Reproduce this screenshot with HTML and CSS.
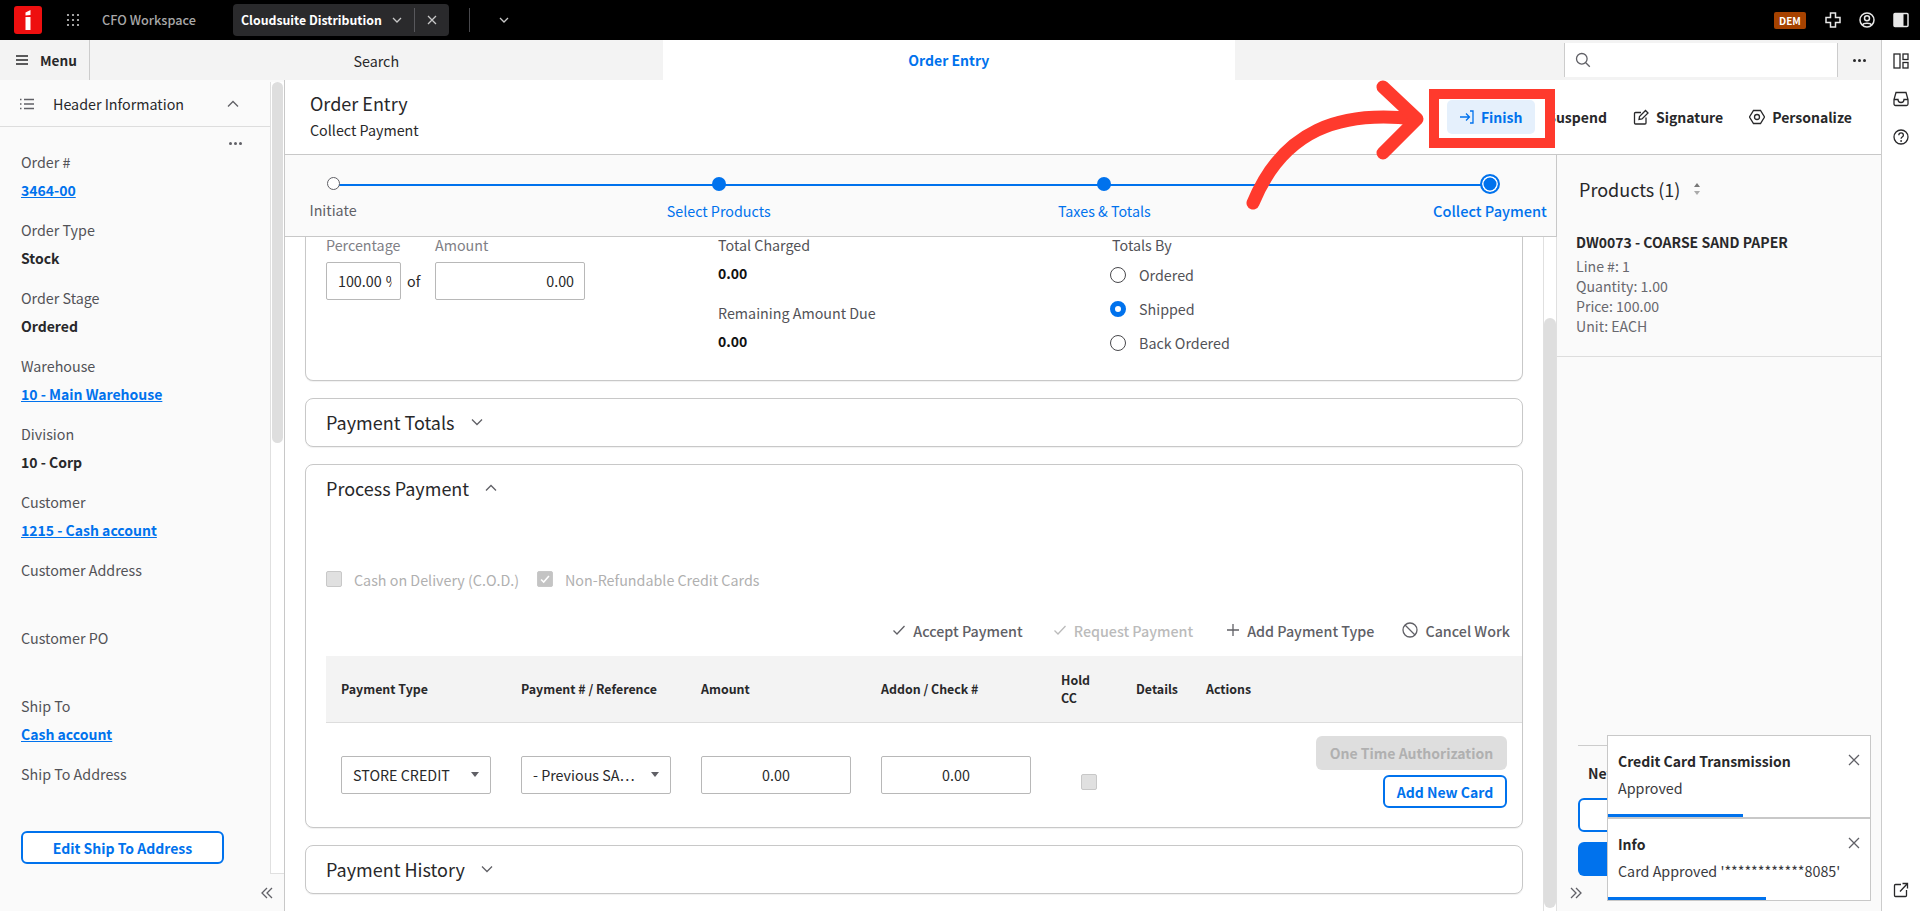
FILE: index.html
```html
<!DOCTYPE html>
<html lang="en">
<head>
<meta charset="utf-8">
<title>Order Entry</title>
<link rel="stylesheet" href="styles.css">
</head>
<body>
<header class="topbar">
  <svg class="logo" viewBox="0 0 28 28"><rect width="28" height="28" rx="3" fill="#ee0f0f"/><path d="M11.5 11h5v13h-5zM11.5 6.500l5-2.500v5l-5 .5z" fill="#fff"/></svg>
  <svg class="grid-ic" viewBox="0 0 14 14" fill="#c8c8c8"><circle cx="2" cy="2" r="1.100"/><circle cx="7" cy="2" r="1.100"/><circle cx="12" cy="2" r="1.100"/><circle cx="2" cy="7" r="1.100"/><circle cx="7" cy="7" r="1.100"/><circle cx="12" cy="7" r="1.100"/><circle cx="2" cy="12" r="1.100"/><circle cx="7" cy="12" r="1.100"/><circle cx="12" cy="12" r="1.100"/></svg>
  <span class="workspace-name">CFO Workspace</span>
  <div class="app-tab">
    <span class="app-tab-name">Cloudsuite Distribution</span>
    <svg class="ic-10 tab-chev" viewBox="0 0 10 10"><path d="M1 3l4 4 4-4" class="st-light"/></svg>
    <span class="tab-sep"></span>
    <svg class="ic-10 tab-x" viewBox="0 0 10 10"><path d="M1 1l8 8M9 1l-8 8" class="st-light"/></svg>
  </div>
  <span class="top-sep"></span>
  <svg class="ic-10 top-chev" viewBox="0 0 10 10"><path d="M1 3l4 4 4-4" class="st-light"/></svg>
  <span class="badge">DEM</span>
  <svg class="ic-16 top-plus" viewBox="0 0 16 16"><path d="M5.500 1h5v4.500H15v5h-4.500V15h-5v-4.500H1v-5h4.500z" class="st-white"/></svg>
  <svg class="ic-16 top-user" viewBox="0 0 16 16"><circle cx="8" cy="8" r="7" class="st-white"/><circle cx="8" cy="6.300" r="2.500" class="st-white"/><path d="M3.500 13c1-2.500 8-2.500 9 0" class="st-white"/></svg>
  <svg class="ic-16 top-panel" viewBox="0 0 16 16"><rect x="1" y="1.500" width="14" height="13" rx="1" class="st-white"/><rect x="1" y="1.500" width="9.500" height="13" fill="#e8e8e8"/></svg>
</header>

<div class="shell">
  <div class="app">
    <nav class="navbar">
      <div class="menu-btn">
        <svg class="ic-12" viewBox="0 0 12 12"><path d="M0 2h12M0 6h12M0 10h12" class="st-dark"/></svg>
        <span>Menu</span>
      </div>
      <div class="nav-tab">Search</div>
      <div class="nav-tab nav-tab-active">Order Entry</div>
      <div class="nav-search">
        <svg class="ic-16" viewBox="0 0 16 16"><circle cx="6.800" cy="6.800" r="5.300" class="st-gray"/><path d="M10.800 10.800l4 4" class="st-gray"/></svg>
      </div>
      <div class="nav-more"><span class="dots dots-dark"><i></i><i></i><i></i></span></div>
    </nav>

    <div class="workspace">
      <aside class="leftpanel">
        <div class="left-top">
          <div class="left-content">
            <div class="left-head">
              <svg class="ic-14" viewBox="0 0 14 14"><path d="M4 2.500h10M4 7h10M4 11.500h10" class="st-gray"/><path d="M0 2.500h1.500M0 7h1.500M0 11.500h1.500" class="st-gray"/></svg>
              <span class="left-title">Header Information</span>
              <svg class="ic-12 left-chev" viewBox="0 0 12 12"><path d="M1 8.500l5-5 5 5" class="st-gray"/></svg>
            </div>
            <div class="left-dots"><span class="dots"><i></i><i></i><i></i></span></div>
            <div class="field"><div class="field-label">Order #</div><a class="field-link">3464-00</a></div>
            <div class="field"><div class="field-label">Order Type</div><div class="field-value">Stock</div></div>
            <div class="field"><div class="field-label">Order Stage</div><div class="field-value">Ordered</div></div>
            <div class="field"><div class="field-label">Warehouse</div><a class="field-link">10 - Main Warehouse</a></div>
            <div class="field"><div class="field-label">Division</div><div class="field-value">10 - Corp</div></div>
            <div class="field"><div class="field-label">Customer</div><a class="field-link">1215 - Cash account</a></div>
            <div class="field"><div class="field-label">Customer Address</div></div>
            <div class="field"><div class="field-label">Customer PO</div></div>
            <div class="field"><div class="field-label">Ship To</div><a class="field-link">Cash account</a></div>
            <div class="field"><div class="field-label">Ship To Address</div></div>
            <button class="btn-outline btn-edit">Edit Ship To Address</button>
          </div>
          <div class="left-track"><div class="left-thumb"></div></div>
        </div>
        <div class="left-foot">
          <svg class="ic-12" viewBox="0 0 12 12"><path d="M6 1L1 6l5 5M11 1L6 6l5 5" class="st-gray"/></svg>
        </div>
      </aside>

      <main class="main">
        <div class="page-head">
          <div class="page-titles">
            <div class="page-title">Order Entry</div>
            <div class="page-sub">Collect Payment</div>
          </div>
          <div class="page-actions">
            <button class="act act-finish">
              <svg class="ic-14" viewBox="0 0 14 14"><path d="M0 7h9M6 3.500L9.500 7 6 10.500M10 1h3v12h-3" class="st-blue"/></svg>
              <span>Finish</span>
            </button>
            <button class="act act-suspend"><span>Suspend</span></button>
            <button class="act">
              <svg class="ic-16" viewBox="0 0 16 16"><path d="M13 8.500V14a1 1 0 0 1-1 1H2.500a1 1 0 0 1-1-1V4.500a1 1 0 0 1 1-1H8M6 10.500l.5-3L12.500 1.500l2.500 2.500-6 6z" class="st-dark"/></svg>
              <span>Signature</span>
            </button>
            <button class="act">
              <svg class="ic-16" viewBox="0 0 16 16"><path d="M4.500 1.500h7L15.500 8l-4 6.500h-7L.5 8z" class="st-dark"/><circle cx="8" cy="8" r="2.500" class="st-dark"/></svg>
              <span>Personalize</span>
            </button>
          </div>
        </div>

        <div class="page-body">
          <section class="center">
            <div class="stepper">
              <div class="step"><span class="step-dot step-dot-open"></span><span class="step-label step-label-muted">Initiate</span></div>
              <div class="step"><span class="step-dot"></span><span class="step-label">Select Products</span></div>
              <div class="step"><span class="step-dot"></span><span class="step-label">Taxes &amp; Totals</span></div>
              <div class="step"><span class="step-dot step-dot-current"></span><span class="step-label step-label-current">Collect Payment</span></div>
            </div>

            <div class="center-scroll">
              <div class="cards">
                <div class="card card-summary">
                  <div class="summary-col">
                    <div class="amount-row">
                      <div class="amount-group amount-group-pct">
                        <label class="muted-label">Percentage</label>
                        <div class="input input-pct"><span>100.00</span><span class="pct-sign">%</span></div>
                      </div>
                      <span class="of">of</span>
                      <div class="amount-group">
                        <label class="muted-label">Amount</label>
                        <div class="input input-amt">0.00</div>
                      </div>
                    </div>
                  </div>
                  <div class="summary-col">
                    <div class="stat"><div class="stat-label">Total Charged</div><div class="stat-value">0.00</div></div>
                    <div class="stat"><div class="stat-label">Remaining Amount Due</div><div class="stat-value">0.00</div></div>
                  </div>
                  <div class="summary-col">
                    <div class="stat-label radio-head">Totals By</div>
                    <div class="radio-row"><span class="radio"></span>Ordered</div>
                    <div class="radio-row"><span class="radio radio-on"></span>Shipped</div>
                    <div class="radio-row"><span class="radio"></span>Back Ordered</div>
                  </div>
                </div>

                <div class="card card-collapsed">
                  <span class="card-title">Payment Totals</span>
                  <svg class="ic-12" viewBox="0 0 12 12"><path d="M1 3.500l5 5 5-5" class="st-gray"/></svg>
                </div>

                <div class="card card-process">
                  <div class="process-head">
                    <span class="card-title">Process Payment</span>
                    <svg class="ic-12" viewBox="0 0 12 12"><path d="M1 8.500l5-5 5 5" class="st-gray"/></svg>
                  </div>
                  <div class="check-row">
                    <span class="check"></span><span class="check-label">Cash on Delivery (C.O.D.)</span>
                    <span class="check check-on"><svg viewBox="0 0 16 16"><path d="M3.500 8.500l3 3 6-7" fill="none" stroke="#fff" stroke-width="1.800"/></svg></span><span class="check-label">Non-Refundable Credit Cards</span>
                  </div>
                  <div class="tools">
                    <span class="tool"><svg class="ic-14" viewBox="0 0 14 14"><path d="M1.500 7.500l3.500 3.500 7.500-8" class="st-gray"/></svg>Accept Payment</span>
                    <span class="tool tool-off"><svg class="ic-14" viewBox="0 0 14 14"><path d="M1.500 7.500l3.500 3.500 7.500-8" class="st-faint"/></svg>Request Payment</span>
                    <span class="tool tool-add"><svg class="ic-14" viewBox="0 0 14 14"><path d="M7 1v12M1 7h12" class="st-gray"/></svg>Add Payment Type</span>
                    <span class="tool"><svg class="ic-16" viewBox="0 0 16 16"><circle cx="8" cy="8" r="7" class="st-gray"/><path d="M3 3l10 10" class="st-gray"/></svg>Cancel Work</span>
                  </div>
                  <div class="tbl-head">
                    <span>Payment Type</span>
                    <span>Payment # / Reference</span>
                    <span>Amount</span>
                    <span>Addon / Check #</span>
                    <span class="tbl-hold">Hold<br>CC</span>
                    <span>Details</span>
                    <span>Actions</span>
                  </div>
                  <div class="tbl-row">
                    <div class="select"><span class="select-text">STORE CREDIT</span><i class="caret"></i></div>
                    <div class="select"><span class="select-text">- Previous SA…</span><i class="caret"></i></div>
                    <div class="input input-cell">0.00</div>
                    <div class="input input-cell">0.00</div>
                    <span class="check check-cell"></span>
                    <span></span>
                    <div class="row-actions">
                      <button class="btn-disabled">One Time Authorization</button>
                      <button class="btn-outline btn-card">Add New Card</button>
                    </div>
                  </div>
                </div>

                <div class="card card-collapsed">
                  <span class="card-title">Payment History</span>
                  <svg class="ic-12" viewBox="0 0 12 12"><path d="M1 3.500l5 5 5-5" class="st-gray"/></svg>
                </div>
              </div>
              <div class="main-track"><div class="main-thumb"></div></div>
            </div>
          </section>

          <aside class="products">
            <div class="products-head">
              <span class="products-title">Products (1)</span>
              <svg class="sort-ic" viewBox="0 0 8 14"><path d="M4 1l3 4H1z" fill="#777"/><path d="M4 13l3-4H1z" fill="#aaa"/></svg>
            </div>
            <div class="product">
              <div class="product-name">DW0073 - COARSE SAND PAPER</div>
              <div class="product-line">Line #: 1</div>
              <div class="product-line">Quantity: 1.00</div>
              <div class="product-line">Price: 100.00</div>
              <div class="product-line">Unit: EACH</div>
            </div>
            <div class="products-foot">
              <div class="foot-title">New</div>
              <div class="foot-btn-outline"></div>
              <div class="foot-btn-solid"></div>
              <svg class="ic-12 foot-chev" viewBox="0 0 12 12"><path d="M1 1l5 5-5 5M6 1l5 5-5 5" class="st-gray"/></svg>
            </div>
          </aside>
        </div>
      </main>
    </div>
  </div>

  <aside class="rail">
    <svg class="ic-16 rail-a" viewBox="0 0 16 16"><rect x="1" y="1" width="6" height="14" class="st-dark"/><rect x="10" y="1" width="5" height="5.500" class="st-dark"/><rect x="10" y="9.500" width="5" height="5.500" class="st-dark"/></svg>
    <svg class="ic-16 rail-b" viewBox="0 0 16 16"><path d="M3 1.500h10l2 7V13a1.500 1.500 0 0 1-1.500 1.500h-11A1.500 1.500 0 0 1 1 13V8.500zM1 8.500h4c0 4 6 4 6 0h4" class="st-dark"/></svg>
    <svg class="ic-16 rail-c" viewBox="0 0 16 16"><circle cx="8" cy="8" r="7" class="st-dark"/><path d="M5.800 6.200c0-3 4.600-3 4.600 0 0 1.800-2.300 1.800-2.300 3.500" class="st-dark"/><circle cx="8.100" cy="12" r=".9" fill="#28282a"/></svg>
    <svg class="ic-16 rail-d" viewBox="0 0 16 16"><path d="M8 2.500H2.500a1 1 0 0 0-1 1V13.500a1 1 0 0 0 1 1H12.500a1 1 0 0 0 1-1V8M7 9.500L14.500 1.500M9.500 1.500h5V6.500" class="st-dark"/></svg>
  </aside>
</div>

<div class="toasts">
  <div class="toast">
    <div class="toast-head"><span class="toast-title">Credit Card Transmission</span><svg class="ic-12" viewBox="0 0 12 12"><path d="M1 1l10 10M11 1L1 11" class="st-gray"/></svg></div>
    <div class="toast-text">Approved</div>
    <div class="toast-bar" style="width:135px"></div>
  </div>
  <div class="toast">
    <div class="toast-head"><span class="toast-title">Info</span><svg class="ic-12" viewBox="0 0 12 12"><path d="M1 1l10 10M11 1L1 11" class="st-gray"/></svg></div>
    <div class="toast-text">Card Approved '************8085'</div>
    <div class="toast-bar" style="width:158px"></div>
  </div>
</div>

<svg class="annotation" viewBox="0 0 1920 911">
  <rect x="1434" y="94" width="116" height="49" fill="none" stroke="#ff3a2d" stroke-width="10"/>
  <path d="M1253 203C1283 130 1340 110 1415 119" fill="none" stroke="#ff3a2d" stroke-width="13" stroke-linecap="round"/>
  <path d="M1383 87L1417 119L1383 153" fill="none" stroke="#ff3a2d" stroke-width="13" stroke-linecap="round" stroke-linejoin="round"/>
</svg>
</body>
</html>
```

FILE: styles.css
```css
* { box-sizing: border-box; }
html, body { margin: 0; padding: 0; height: 911px; overflow: hidden; }
body {
  font-family: "Noto Sans CJK SC", "Noto Sans", sans-serif;
  font-size: 14.300px;
  color: #28282a;
  background: #fff;
  display: flex;
  flex-direction: column;
  position: relative;
}
button { font-family: inherit; cursor: default; }

.st-light, .st-white, .st-dark, .st-gray, .st-faint, .st-blue { fill: none; stroke-width: 1.3; }
.st-light { stroke: #c8c8c8; }
.st-white { stroke: #e8e8e8; stroke-width: 1.5; }
.st-dark { stroke: #28282a; }
.st-gray { stroke: #606066; }
.st-faint { stroke: #bbb; }
.st-blue { stroke: #0072ed; }
.ic-10 { width: 10px; height: 10px; flex: none; }
.ic-12 { width: 12px; height: 12px; flex: none; }
.ic-14 { width: 14px; height: 14px; flex: none; }
.ic-16 { width: 16px; height: 16px; flex: none; }

.dots { display: inline-flex; gap: 2px; }
.dots i { width: 3px; height: 3px; border-radius: 50%; background: #606066; }
.dots-dark i { background: #28282a; }

/* top bar */
.topbar { height: 40px; flex: none; background: #000; display: flex; align-items: center; padding-left: 14px; }
.logo { width: 28px; height: 28px; flex: none; }
.grid-ic { width: 14px; height: 14px; margin-left: 24px; flex: none; }
.workspace-name { margin-left: 22px; width: 131px; font-size: 12.700px; font-weight: 500; color: #a8a8a8; line-height: 20px; white-space: nowrap; }
.app-tab { width: 216px; height: 32px; background: #2a2a2c; border-radius: 4px; display: flex; align-items: center; padding-left: 8px; }
.app-tab-name { width: 151px; font-size: 12.300px; font-weight: 600; color: #fff; line-height: 20px; white-space: nowrap; }
.tab-chev { margin-left: 0; }
.tab-sep { width: 1px; height: 24px; background: #58585c; margin-left: 12px; }
.tab-x { margin-left: 12px; }
.top-sep { width: 1px; height: 24px; background: #48484c; margin-left: 20px; }
.top-chev { margin-left: 29px; }
.badge { margin-left: auto; width: 32px; height: 17px; background: #a64200; border-radius: 2px; color: #fff; font-size: 10px; font-weight: 700; line-height: 17px; text-align: center; }
.top-plus { margin-left: 19px; }
.top-user { margin-left: 18px; }
.top-panel { margin-left: 18px; margin-right: 11px; }

/* shell */
.shell { flex: 1; display: flex; min-height: 0; }
.app { flex: 1; display: flex; flex-direction: column; min-width: 0; }
.rail { width: 39px; flex: none; border-left: 1px solid #ccc; background: #fff; display: flex; flex-direction: column; align-items: center; padding-top: 13px; }
.rail-b { margin-top: 22px; }
.rail-c { margin-top: 22px; }
.rail-d { margin-top: auto; margin-bottom: 13px; }

/* nav */
.navbar { height: 40px; flex: none; background: #f3f3f3; display: flex; align-items: stretch; }
.menu-btn { width: 90px; flex: none; border-right: 1px solid #ccc; display: flex; align-items: center; gap: 12px; padding-left: 16px; font-size: 13.600px; font-weight: 600; }
.nav-tab { width: 572.500px; flex: none; display: flex; align-items: center; justify-content: center; font-size: 14.300px; }
.nav-tab-active { background: #fff; color: #0072ed; font-weight: 600; font-size: 14px; }
.nav-search { margin: 3px 0 3px 329px; width: 274px; background: #fff; border-left: 1px solid #ccc; border-right: 1px solid #ccc; display: flex; align-items: center; padding-left: 10px; }
.nav-more { flex: 1; display: flex; align-items: center; justify-content: center; }

/* workspace */
.workspace { flex: 1; display: flex; min-height: 0; }

/* left panel */
.leftpanel { width: 285px; flex: none; background: #fafafa; border-right: 1px solid #c8c8c8; display: flex; flex-direction: column; padding-top: 2px; }
.left-top { display: flex; height: 792px; }
.left-content { width: 270px; flex: none; overflow: hidden; }
.left-track { width: 14px; flex: none; background: #fff; border-left: 1px solid #e0e0e0; border-bottom: 1px solid #e0e0e0; padding: 0 1px; }
.left-thumb { height: 361px; background: #dedede; border-radius: 6px; }
.left-head { height: 45px; border-bottom: 1px solid #ddd; display: flex; align-items: center; padding-left: 20px; }
.left-title { margin-left: 19px; width: 174px; font-size: 14.300px; line-height: 22px; }
.left-chev { margin-left: 0; }
.left-dots { height: 21px; display: flex; justify-content: flex-end; align-items: flex-start; padding: 15px 28px 0 0; }
.field { height: 68px; padding-left: 21px; }
.field-label { height: 28px; line-height: 28px; font-size: 14.300px; color: #525257; }
.field-value, .field-link { display: block; height: 28px; line-height: 28px; font-size: 14px; font-weight: 600; color: #28282a; }
.field-link { color: #0072ed; text-decoration: underline; width: max-content; }
.btn-outline { background: #fff; border: 2px solid #0072ed; border-radius: 6px; color: #0072ed; font-size: 14px; font-weight: 600; padding: 0; line-height: 20px; }
.btn-edit { display: block; width: 203px; height: 33px; margin: 3px 0 0 21px; }
.left-foot { flex: 1; display: flex; justify-content: flex-end; align-items: center; padding: 0 11px 0 0; }

/* main */
.main { flex: 1; display: flex; flex-direction: column; min-width: 0; }
.page-head { height: 75px; flex: none; background: #fff; border-bottom: 1px solid #c8c8c8; display: flex; justify-content: space-between; padding: 0 29px 0 25px; }
.page-titles { padding-top: 10px; }
.page-title { font-size: 18px; line-height: 26px; }
.page-sub { font-size: 14.300px; line-height: 26px; margin-top: 1px; }
.page-actions { display: flex; align-items: center; }
.act { background: none; border: 0; padding: 0; display: flex; align-items: center; gap: 7px; font-size: 14px; font-weight: 600; color: #28282a; line-height: 20px; margin-left: 26px; }
.act-finish { width: 88px; height: 34px; background: #e5f0fc; border-radius: 5px; color: #0072ed; justify-content: center; }
.act-suspend { margin-left: 12px; }
.page-body { flex: 1; display: flex; min-height: 0; }

/* center */
.center { width: 1272px; flex: none; display: flex; flex-direction: column; }
.stepper { height: 82px; flex: none; background: #fafafa; border-bottom: 1px solid #c8c8c8; border-right: 1px solid #c8c8c8; display: flex; justify-content: space-between; position: relative; padding-right: 6px; }
.stepper::before { content: ""; position: absolute; left: 48px; right: 66px; top: 29px; height: 2px; background: #0072ed; }
.step { width: 120px; display: flex; flex-direction: column; align-items: center; position: relative; padding-top: 22px; }
.step:first-child { margin-left: -12px; }
.step-dot { width: 14px; height: 14px; border-radius: 50%; background: #0072ed; }
.step-dot-open { width: 13px; height: 13px; background: #fff; border: 1px solid #606066; }
.step-dot-current { width: 20px; height: 20px; margin-top: -3px; margin-bottom: -3px; border: 2px solid #0072ed; box-shadow: inset 0 0 0 1.500px #fff; background: #0072ed; }
.step-label { margin-top: 10px; line-height: 20px; font-size: 14.300px; color: #0072ed; white-space: nowrap; }
.step-label-muted { color: #606066; }
.step-label-current { font-size: 14.600px; font-weight: 500; }

.center-scroll { flex: 1; display: flex; min-height: 0; }
.cards { width: 1258px; flex: none; padding: 0 20px; }
.main-track { flex: 1; background: #fff; border-left: 1px solid #e0e0e0; border-right: 1px solid #e0e0e0; padding-top: 81px; }
.main-thumb { height: 590px; background: #dedede; border-radius: 6px; }

.card { background: #fff; border: 1px solid #c8c8c8; border-radius: 8px; box-shadow: 0 1px 1px rgba(0,0,0,.06); margin-bottom: 17px; }
.card-summary { height: 144px; border-top: 0; border-top-left-radius: 0; border-top-right-radius: 0; display: grid; grid-template-columns: 392px 394px 1fr; padding-left: 20px; margin-bottom: 17px; }
.amount-row { display: flex; }
.amount-group-pct { width: 75px; flex: none; }
.muted-label { display: block; height: 17px; line-height: 15px; margin: 0 0 8px; font-size: 14.300px; color: #808086; white-space: nowrap; }
.input { height: 38px; border: 1px solid #b8b8b8; border-radius: 2px; background: #fff; font-size: 14.300px; display: flex; align-items: center; padding-bottom: 2px; }
.input-pct { width: 75px; padding-left: 11px; white-space: nowrap; }
.pct-sign { margin-left: 4px; width: 7px; flex: none; clip-path: inset(0 1px 0 0); }
.amount-group .input-amt { width: 150px; justify-content: flex-end; padding-right: 10px; }
.of { margin: 33px 0 0 6px; width: 28px; line-height: 22px; font-size: 14.300px; }
.stat { height: 68px; }
.stat-label { height: 17px; line-height: 15px; font-size: 14.300px; color: #525257; white-space: nowrap; }
.stat-value { margin-top: 9px; line-height: 20px; font-size: 14px; font-weight: 600; color: #111; }
.radio-head { margin-bottom: 4px; }
.radio-row { height: 34px; display: flex; align-items: center; gap: 13px; font-size: 14.300px; color: #525257; margin-left: -2px; padding-bottom: 2px; }
.radio { width: 16px; height: 16px; border: 1px solid #48484c; border-radius: 50%; background: #fff; flex: none; margin-top: 2px; }
.radio-on { border: 5px solid #0072ed; }

.card-collapsed { height: 49px; display: flex; align-items: center; gap: 16px; padding: 0 0 2px 20px; }
.card-title { font-size: 18px; line-height: 26px; color: #28282a; }
.card-process { height: 364px; padding-left: 20px; overflow: hidden; }
.process-head { height: 45px; display: flex; align-items: center; gap: 16px; }
.check-row { margin-top: 59px; height: 20px; display: flex; align-items: center; }
.check { width: 16px; height: 16px; border: 1px solid #c8c8c8; border-radius: 2px; background: #e0e0e0; flex: none; display: block; }
.check-on { background: #c4c4c4; }
.check-on svg { display: block; width: 14px; height: 14px; }
.check-label { margin-left: 12px; width: 183px; font-size: 14.300px; color: #b0b0b0; white-space: nowrap; }
.tools { margin-top: 31px; height: 20px; display: flex; justify-content: flex-end; align-items: center; gap: 28px; padding-right: 12px; }
.tool { display: flex; align-items: center; gap: 7px; font-size: 14.300px; font-weight: 500; color: #606066; white-space: nowrap; }
.tool-off { color: #bbb; margin-right: 5px; margin-left: 2px; }
.tbl-head, .tbl-row { display: grid; grid-template-columns: 180px 180px 180px 180px 75px 70px 1fr; padding-left: 15px; }
.tbl-head { margin-top: 16px; height: 67px; background: #f3f3f3; border-bottom: 1px solid #ddd; align-items: center; font-size: 12.400px; font-weight: 600; line-height: 18px; }
.tbl-hold { display: block; }
.tbl-row { height: 105px; }
.select { width: 150px; height: 38px; margin-top: 33px; border: 1px solid #b8b8b8; border-radius: 2px; background: #fff; display: flex; align-items: center; justify-content: space-between; padding: 0 11px 2px 11px; font-size: 14.300px; }
.select-text { white-space: nowrap; overflow: hidden; }
.caret { width: 0; height: 0; border-left: 4px solid transparent; border-right: 4px solid transparent; border-top: 5px solid #606066; flex: none; }
.input-cell { width: 150px; margin-top: 33px; justify-content: center; }
.check-cell { margin: 51px 0 0 20px; }
.row-actions { display: flex; flex-direction: column; align-items: flex-end; gap: 5px; padding: 13px 15px 0 0; }
.btn-disabled { width: 191px; height: 34px; background: #dedede; border: 0; border-radius: 6px; color: #b0b0b0; font-size: 14px; font-weight: 600; padding: 0; }
.btn-card { width: 124px; height: 33px; }

/* products */
.products { flex: 1; min-width: 0; background: #fafafa; display: flex; flex-direction: column; }
.products-head { height: 67px; display: flex; align-items: center; padding: 0 0 0 22px; gap: 13px; }
.products-title { font-size: 18px; line-height: 26px; }
.sort-ic { width: 8px; height: 14px; }
.product { height: 135px; border-bottom: 1px solid #ddd; padding: 8px 0 0 19px; }
.product-name { font-size: 14px; font-weight: 600; line-height: 24px; margin-bottom: 2px; }
.product-line { font-size: 14.100px; line-height: 20px; color: #68686e; }
.products-foot { margin-top: auto; height: 166px; padding: 0 20px 0 21px; position: relative; }
.foot-title { border-top: 1px solid #ccc; padding-top: 16px; font-size: 14px; font-weight: 600; line-height: 22px; height: 53px; padding-left: 10px; }
.foot-btn-outline { height: 34px; border: 2px solid #0072ed; border-radius: 6px; background: #fff; }
.foot-btn-solid { height: 34px; margin-top: 10px; border-radius: 6px; background: #0072ed; }
.foot-chev { margin: 11px 0 0 -8px; display: block; }

/* toasts */
.toasts { position: absolute; left: 1607px; top: 735px; width: 264px; }
.toast { height: 83px; background: #fff; border: 1px solid #c8c8c8; position: relative; padding: 0 10px; }
.toast-head { height: 47px; display: flex; align-items: center; justify-content: space-between; }
.toast-title { font-size: 14px; font-weight: 600; line-height: 22px; margin-top: 2px; }
.toast-text { font-size: 14.300px; line-height: 22px; margin-top: -6px; color: #3a3a3e; }
.toast-bar { position: absolute; left: 0; bottom: 0; height: 3px; background: #0072ed; }

/* annotation */
.annotation { position: absolute; left: 0; top: 0; width: 1920px; height: 911px; pointer-events: none; }
```
